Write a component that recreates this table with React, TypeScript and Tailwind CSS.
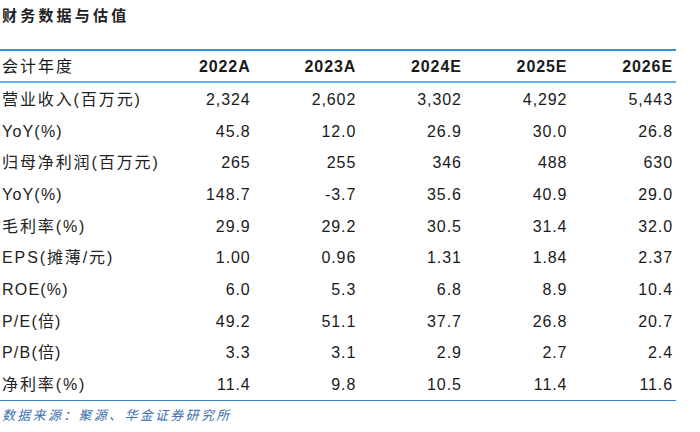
const years = ["2022A", "2023A", "2024E", "2025E", "2026E"];

const rows: { label: string; values: string[] }[] = [
  { label: "营业收入(百万元)", values: ["2,324", "2,602", "3,302", "4,292", "5,443"] },
  { label: "YoY(%)", values: ["45.8", "12.0", "26.9", "30.0", "26.8"] },
  { label: "归母净利润(百万元)", values: ["265", "255", "346", "488", "630"] },
  { label: "YoY(%)", values: ["148.7", "-3.7", "35.6", "40.9", "29.0"] },
  { label: "毛利率(%)", values: ["29.9", "29.2", "30.5", "31.4", "32.0"] },
  { label: "EPS(摊薄/元)", values: ["1.00", "0.96", "1.31", "1.84", "2.37"] },
  { label: "ROE(%)", values: ["6.0", "5.3", "6.8", "8.9", "10.4"] },
  { label: "P/E(倍)", values: ["49.2", "51.1", "37.7", "26.8", "20.7"] },
  { label: "P/B(倍)", values: ["3.3", "3.1", "2.9", "2.7", "2.4"] },
  { label: "净利率(%)", values: ["11.4", "9.8", "10.5", "11.4", "11.6"] },
];

const grid = "grid grid-cols-[148px_repeat(5,105.6px)] items-center";

// labels with more than two Chinese characters are set a bit looser
const isWide = (s: string) => (s.match(/[\u4e00-\u9fff]/g) || []).length > 2;

export default function App() {
  return (
    <div
      className="w-[700px] h-[432px] bg-white text-[#1a1a1a] overflow-hidden"
      style={{ fontFamily: '"Liberation Sans", "Noto Sans CJK SC", sans-serif' }}
    >
      {/* Title */}
      <div className="h-[32px] pt-[5px] pl-[2px] text-[15px] font-bold tracking-[3.2px] leading-[21px] text-[#222]">
        财务数据与估值
      </div>

      <div className="mt-[17px] w-[676px]">
        {/* Header */}
        <div className={`${grid} h-[34px] border-t-2 border-b-2 border-t-[#3a8fdc] border-b-[#6cb0e4]`}>
          <div className="pl-[2px] pt-[2px] text-[16px] tracking-[2px]">会计年度</div>
          {years.map((y) => (
            <div key={y} className="text-right pr-[3px] pt-[2px] text-[16px] font-bold tracking-[0.9px]">
              {y}
            </div>
          ))}
        </div>

        {/* Body */}
        <div className="border-b-[1.5px] border-[#3a7fc4]">
          {rows.map((r, i) => (
            <div key={i} className={`${grid} h-[31.7px] pt-[2px]`}>
              <div
                className={`pl-[2px] text-[16px] whitespace-nowrap text-[#222] ${
                  isWide(r.label) ? "tracking-[1.9px]" : "tracking-[1.2px]"
                }`}
              >
                {r.label}
              </div>
              {r.values.map((v, j) => (
                <div key={j} className="text-right pr-[3px] text-[16px] tracking-[0.9px]">
                  {v}
                </div>
              ))}
            </div>
          ))}
        </div>
      </div>

      {/* Source */}
      <div className="mt-[6px] pl-[2px] text-[13px] italic tracking-[2.3px] text-[#3d6fae] leading-[18px]">
        数据来源：聚源、华金证券研究所
      </div>
    </div>
  );
}
